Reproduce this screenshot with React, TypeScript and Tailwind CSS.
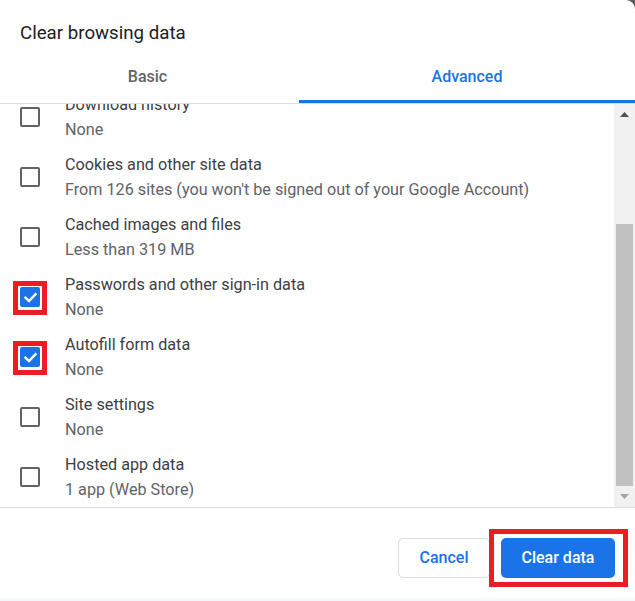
import React from "react"

type Item = {
  title: string
  sub: string
  checked?: boolean
}

const items: Item[] = [
  { title: "Download history", sub: "None" },
  { title: "Cookies and other site data", sub: "From 126 sites (you won't be signed out of your Google Account)" },
  { title: "Cached images and files", sub: "Less than 319 MB" },
  { title: "Passwords and other sign-in data", sub: "None", checked: true },
  { title: "Autofill form data", sub: "None", checked: true },
  { title: "Site settings", sub: "None" },
  { title: "Hosted app data", sub: "1 app (Web Store)" },
]

function Checkbox({ checked }: { checked?: boolean }) {
  if (!checked) {
    return <div className="w-5 h-5 border-2 border-[#5f6368] rounded-[2px] box-border" />
  }
  return (
    <div className="relative w-5 h-5">
      <div className="w-5 h-5 bg-[#1a73e8] rounded-[2px] flex items-center justify-center">
        <svg width="15" height="15" viewBox="0 0 14 14" fill="none">
          <polyline points="2.3,7.2 5.6,10.3 11.7,3.9" stroke="white" strokeWidth="2.2" strokeLinecap="square" />
        </svg>
      </div>
      <span className="absolute -left-[7px] -right-[7px] -top-[6px] -bottom-[8px] border-[5px] border-[#ec1c24]" />
    </div>
  )
}

function Row({ item }: { item: Item }) {
  return (
    <div className="h-[50px] flex items-center shrink-0">
      <div className="pl-5">
        <Checkbox checked={item.checked} />
      </div>
      <div className="ml-[25px] flex flex-col text-[16.2px] leading-[25px] whitespace-nowrap">
        <span className="text-[#3c4043]">{item.title}</span>
        <span className="text-[#5f6368]">{item.sub}</span>
      </div>
    </div>
  )
}

export default function App() {
  return (
    <div className="w-[635px] h-[601px] bg-[#5c5c5c] font-['Roboto',sans-serif] overflow-hidden">
      <div className="h-full bg-white rounded-tr-[9px] flex flex-col">
        <div className="h-[46px] pt-5 pl-5 text-[18.7px] leading-[26px] text-[#202124]">Clear browsing data</div>

        <div className="h-[58px] flex border-b border-[#dadce0]">
          <div className="w-[299px] pr-[4px] flex flex-col items-center">
            <span className="pt-5 text-[16px] leading-[22px] font-medium text-[#5f6368]">Basic</span>
          </div>
          <div className="flex-1 flex flex-col items-center">
            <span className="pt-5 text-[16px] leading-[22px] font-medium text-[#1a73e8]">Advanced</span>
            <div className="flex-1" />
            <div className="h-[3px] w-full bg-[#1a73e8]" />
          </div>
        </div>

        <div className="h-[403px] flex">
          <div className="flex-1 overflow-hidden">
            <div className="-mt-[12px] flex flex-col gap-[10px]">
              {items.map((it) => (
                <Row key={it.title} item={it} />
              ))}
            </div>
          </div>
          <div className="w-[21px] bg-[#f1f1f1] flex flex-col">
            <div className="h-[21px] flex items-center justify-center">
              <svg width="9" height="5" viewBox="0 0 9 5">
                <polygon points="0,5 9,5 4.5,0" fill="#505050" />
              </svg>
            </div>
            <div className="flex-1" />
            <div className="h-[262px] mx-[2px] bg-[#c1c1c1]" />
            <div className="h-[21px] flex items-center justify-center">
              <svg width="9" height="5" viewBox="0 0 9 5">
                <polygon points="0,0 9,0 4.5,5" fill="#a3a3a3" />
              </svg>
            </div>
          </div>
        </div>

        <div className="h-[91px] border-t border-[#dadce0] pt-[30px] pr-5 flex items-start justify-end gap-[11px]">
          <button className="w-[92px] h-10 border border-[#dadce0] rounded-[5px] bg-white text-[16px] font-medium text-[#1a73e8]">
            Cancel
          </button>
          <div className="relative h-10">
            <button className="w-[114px] h-10 rounded-[5px] bg-[#1a73e8] text-[16px] font-medium text-white">
              Clear data
            </button>
            <span className="absolute -left-[12px] -right-[13px] -top-[9px] -bottom-[9px] border-[5px] border-[#ec1c24]" />
          </div>
        </div>

        <div className="h-[3px] bg-[#f5f6f7]" />
      </div>
    </div>
  )
}
